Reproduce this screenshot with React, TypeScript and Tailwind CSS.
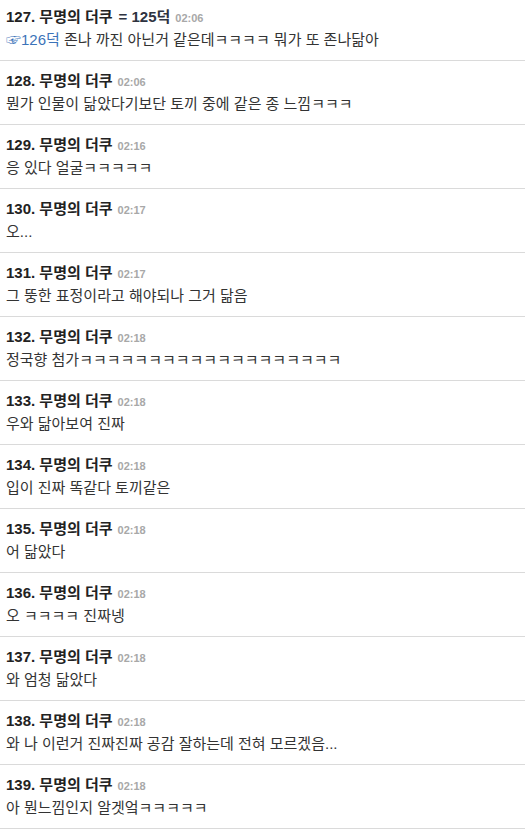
const rows: { no: number; extra?: string; time: string; body: React.ReactNode }[] = [
  {
    no: 127,
    extra: '= 125덕',
    time: '02:06',
    body: (
      <>
        <span className="text-[#3b73b9]">☞126덕</span> 존나 까진 아닌거 같은데ㅋㅋㅋㅋ 뭐가 또 존나닮아
      </>
    ),
  },
  { no: 128, time: '02:06', body: '뭔가 인물이 닮았다기보단 토끼 중에 같은 종 느낌ㅋㅋㅋ' },
  { no: 129, time: '02:16', body: '응 있다 얼굴ㅋㅋㅋㅋㅋ' },
  { no: 130, time: '02:17', body: '오...' },
  { no: 131, time: '02:17', body: '그 뚱한 표정이라고 해야되나 그거 닮음' },
  { no: 132, time: '02:18', body: '정국향 첨가ㅋㅋㅋㅋㅋㅋㅋㅋㅋㅋㅋㅋㅋㅋㅋㅋㅋㅋㅋ' },
  { no: 133, time: '02:18', body: '우와 닮아보여 진짜' },
  { no: 134, time: '02:18', body: '입이 진짜 똑같다 토끼같은' },
  { no: 135, time: '02:18', body: '어 닮았다' },
  { no: 136, time: '02:18', body: '오 ㅋㅋㅋㅋ 진짜넹' },
  { no: 137, time: '02:18', body: '와 엄청 닮았다' },
  { no: 138, time: '02:18', body: '와 나 이런거 진짜진짜 공감 잘하는데 전혀 모르겠음...' },
  { no: 139, time: '02:18', body: '아 뭔느낌인지 알겟엌ㅋㅋㅋㅋㅋ' },
]

export default function App() {
  return (
    <div
      className="bg-white min-h-screen overflow-hidden"
      style={{ fontFamily: '"Liberation Sans", "Noto Sans CJK KR", sans-serif' }}
    >
      <div className="-mt-[3px]">
        {rows.map(r => (
          <div key={r.no} className="border-b border-[#dadada] pl-[6px] pt-[10px] pb-[10px]">
            <div className="h-5 leading-5 flex items-baseline whitespace-nowrap">
              <span className="text-[15px] font-bold text-[#222]">
                {r.no}. 무명의 더쿠
              </span>
              {r.extra && (
                <span className="text-[15px] font-bold text-[#2e3340] ml-[6px]">{r.extra}</span>
              )}
              <span className="text-[11px] font-bold text-[#a8a8a8] ml-[5px]">{r.time}</span>
            </div>
            <div className="mt-[3px] h-5 leading-5 text-[15px] text-[#333] whitespace-nowrap">
              {r.body}
            </div>
          </div>
        ))}
      </div>
    </div>
  )
}
